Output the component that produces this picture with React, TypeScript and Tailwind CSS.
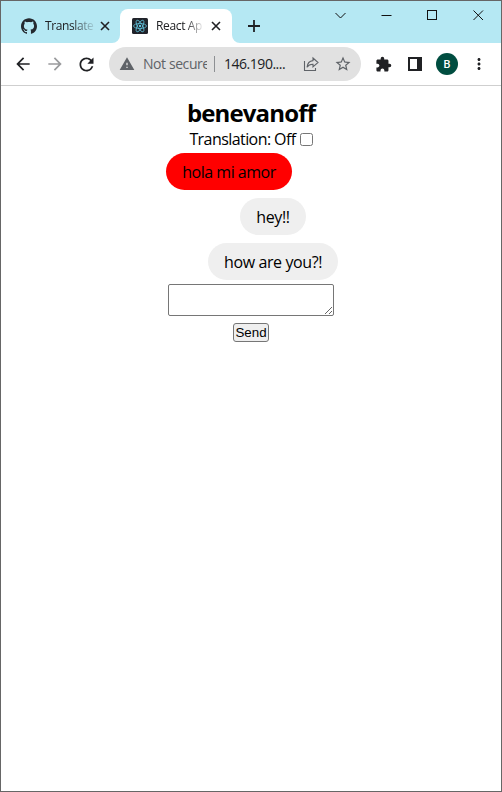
import React, { useState } from "react";
import { SiGithub } from "react-icons/si";
import {
  MdArrowBack,
  MdArrowForward,
  MdRefresh,
  MdWarning,
  MdStarBorder,
  MdExtension,
  MdMoreVert,
} from "react-icons/md";

function CloseGlyph() {
  return (
    <svg width="10" height="10" viewBox="0 0 10 10" className="shrink-0" stroke="#202124" strokeWidth="1.6">
      <path d="M1 1l8 8M9 1l-8 8" />
    </svg>
  );
}

function ReactBadge() {
  return (
    <svg width="16" height="16" viewBox="0 0 16 16" className="shrink-0" fill="none" stroke="#61c5df" strokeWidth="0.75">
      <rect width="16" height="16" rx="1.5" fill="#20232a" stroke="none" />
      <ellipse cx="8" cy="8" rx="6.5" ry="2.5" />
      <ellipse cx="8" cy="8" rx="6.5" ry="2.5" transform="rotate(60 8 8)" />
      <ellipse cx="8" cy="8" rx="6.5" ry="2.5" transform="rotate(120 8 8)" />
      <circle cx="8" cy="8" r="1.2" fill="#61c5df" stroke="none" />
    </svg>
  );
}

function TabCurve({ flip = false }: { flip?: boolean }) {
  return (
    <svg width="8" height="8" viewBox="0 0 8 8" fill="#fff" className={flip ? "shrink-0 self-end -scale-x-100" : "shrink-0 self-end"}>
      <path d="M8 0A8 8 0 0 1 0 8H8Z" />
    </svg>
  );
}

function TabStrip() {
  return (
    <div className="flex h-[42px] shrink-0 bg-[#b5e8f3] text-xs leading-4 text-[#202124]">
      <div className="flex w-[111px] items-center pt-2 pl-5">
        <SiGithub size={16} color="#24292f" className="shrink-0" />
        <span className="ml-2 w-[49px] whitespace-nowrap tracking-[-0.4px] [mask-image:linear-gradient(to_right,#000_55%,transparent_105%)]">
          Translate
        </span>
        <span className="ml-[6px]"><CloseGlyph /></span>
      </div>
      <TabCurve />
      <div className="mt-2 flex w-[112px] shrink-0 items-center rounded-t-lg bg-white pl-3">
        <ReactBadge />
        <span className="ml-2 w-[48px] whitespace-nowrap tracking-[-0.35px] [mask-image:linear-gradient(to_right,#000_62%,transparent_100%)]">
          React Ap
        </span>
        <span className="ml-[7px]"><CloseGlyph /></span>
      </div>
      <TabCurve flip />
      <svg width="12" height="12" viewBox="0 0 12 12" className="mt-[19px] ml-2 shrink-0" stroke="#202124" strokeWidth="1.8">
        <path d="M6 0v12M0 6h12" />
      </svg>
      <div className="ml-auto flex gap-[35px] pt-[9px] pr-[17px]">
        <svg width="11" height="11" viewBox="0 0 11 11" fill="none" stroke="#111">
          <path d="M.5 3l5 5l5-5" />
        </svg>
        <svg width="11" height="11" viewBox="0 0 11 11" fill="none" stroke="#111">
          <path d="M0.5 5.5h10" />
        </svg>
        <svg width="11" height="11" viewBox="0 0 11 11" fill="none" stroke="#111">
          <rect x=".5" y=".5" width="9" height="9" />
        </svg>
        <svg width="11" height="11" viewBox="0 0 11 11" fill="none" stroke="#111">
          <path d="M.5.5l9.5 9.5M10 .5L.5 10" />
        </svg>
      </div>
    </div>
  );
}

function Toolbar() {
  return (
    <div className="flex h-[43px] shrink-0 items-center border-b border-[#cfcfcf] bg-white pl-3 text-[#202124]">
      <MdArrowBack size={20} className="shrink-0" />
      <MdArrowForward size={20} className="ml-3 shrink-0 text-[#9a9b9d]" />
      <MdRefresh size={21} className="ml-[11px] shrink-0" />
      <div className="ml-3 flex h-[34px] w-[252px] shrink-0 items-center rounded-full bg-[#e1e1e1] pl-[10px] text-sm leading-5">
        <MdWarning size={16} className="shrink-0 text-[#5f6368]" />
        <span className="ml-2 w-[64px] overflow-hidden whitespace-nowrap tracking-[-0.42px] text-[#5f6368]">
          Not secure
        </span>
        <span className="ml-[7px] h-4 w-px bg-[#8d9093]" />
        <span className="ml-[9px] w-[66px] whitespace-nowrap tracking-[-0.47px]">146.190....</span>
        <svg width="16" height="16" viewBox="0 0 16 16" className="ml-[13px] shrink-0" fill="none" stroke="#5f6368" strokeWidth="1.1">
          <path d="M1.5 5v9.5h11V12" />
          <path d="M10 2l5 4.5l-5 4.3V8.3C7.3 8.2 5.5 9 4 11.2C4.4 7.5 6.5 5 10 4.6Z" />
        </svg>
        <MdStarBorder size={18} className="ml-[15px] shrink-0 text-[#5f6368]" />
      </div>
      <MdExtension size={17} className="ml-[14px] shrink-0" />
      <svg width="14" height="14" viewBox="0 0 14 14" className="ml-4 shrink-0">
        <path d="M0 0h14v14H0zM2 2v10h7V2z" fill="#202124" fillRule="evenodd" />
      </svg>
      <div className="ml-[14px] flex size-[22px] shrink-0 items-center justify-center rounded-full bg-[#004d40] font-[Roboto] text-[11px] leading-none font-medium text-white">
        B
      </div>
      <MdMoreVert size={18} className="ml-3 shrink-0" />
    </div>
  );
}

export default function App() {
  const [translate, setTranslate] = useState(false);
  return (
    <div className="flex h-[792px] w-[502px] flex-col overflow-hidden border border-[#666] bg-white font-['Open_Sans','Noto_Sans',sans-serif]">
      <TabStrip />
      <Toolbar />
      <main className="flex flex-col items-center pt-[11px] text-base text-black">
        <h1 className="text-2xl leading-8 font-bold tracking-[-0.85px]">benevanoff</h1>
        <label className="flex h-[21px] items-center text-base leading-5 tracking-[-0.57px]">
          <span className="pb-px whitespace-nowrap">Translation: Off</span>
          <input
            type="checkbox"
            checked={translate}
            onChange={() => setTranslate(!translate)}
            className="ml-1 size-[13px]"
          />
        </label>
        <div className="mt-[3px] flex w-[170px] flex-col gap-2 whitespace-nowrap">
          <div className="flex h-[37px] w-[126px] items-center justify-center self-start rounded-full bg-[#ff0000] tracking-[-0.5px]">
            hola mi amor
          </div>
          <div className="mr-[30px] flex h-[37px] w-[66px] items-center justify-center self-end rounded-full bg-[#efefef] tracking-[-0.35px]">
            hey!!
          </div>
          <div className="-mr-[2px] flex h-[37px] w-[130px] items-center justify-center self-end rounded-full bg-[#efefef] tracking-[-0.4px]">
            how are you?!
          </div>
        </div>
        <textarea className="mt-1 h-8 w-[166px] resize rounded-[2px] border border-[#767676] bg-white" />
        <button className="mt-[7px] flex h-[19px] w-9 items-center justify-center rounded-[3px] border border-[#767676] bg-[#efefef] font-['Liberation_Sans',sans-serif] text-[13.333px] leading-[15px]">
          Send
        </button>
      </main>
    </div>
  );
}
